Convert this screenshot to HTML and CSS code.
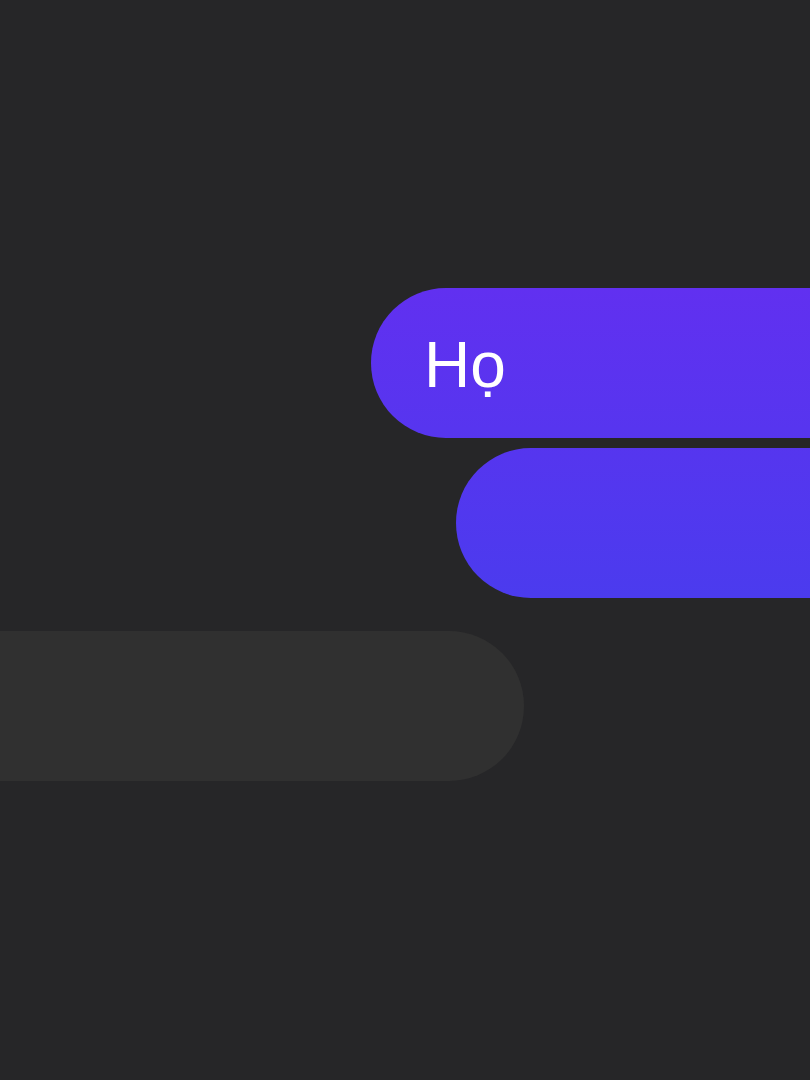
FILE: index.html
```html
<!DOCTYPE html>
<html lang="vi">
<head>
<meta charset="utf-8">
<link rel="stylesheet" href="styles.css">
</head>
<body>
<div class="chat">
  <div class="msg msg-out msg-first"><span class="msg-text">Họ</span></div>
  <div class="msg msg-out msg-second"></div>
  <div class="msg msg-in"></div>
</div>
</body>
</html>
```
FILE: styles.css
```css
html, body {
  margin: 0;
  padding: 0;
  background: #262628;
  height: 100%;
}
.chat {
  width: 810px;
  height: 1080px;
  overflow: hidden;
  padding-top: 288px;
  box-sizing: border-box;
  display: flex;
  flex-direction: column;
}
.msg {
  height: 150px;
  border-radius: 75px;
  flex: none;
  display: flex;
  align-items: center;
  box-sizing: border-box;
}
.msg-out {
  background: linear-gradient(180deg, #6130f0 288px, #4b3bee 597px);
  background-attachment: fixed;
  width: 560px;
}
.msg-first {
  margin-left: 371px;
  padding-left: 53px;
}
.msg-second {
  margin-left: 456px;
  margin-top: 10px;
}
.msg-in {
  background: #303030;
  margin-left: -100px;
  width: 624px;
  margin-top: 33px;
}
.msg-text {
  font-family: "Liberation Sans", Arial, sans-serif;
  font-size: 64px;
  color: #ffffff;
  line-height: 1;
  padding-top: 4px;
}
```
